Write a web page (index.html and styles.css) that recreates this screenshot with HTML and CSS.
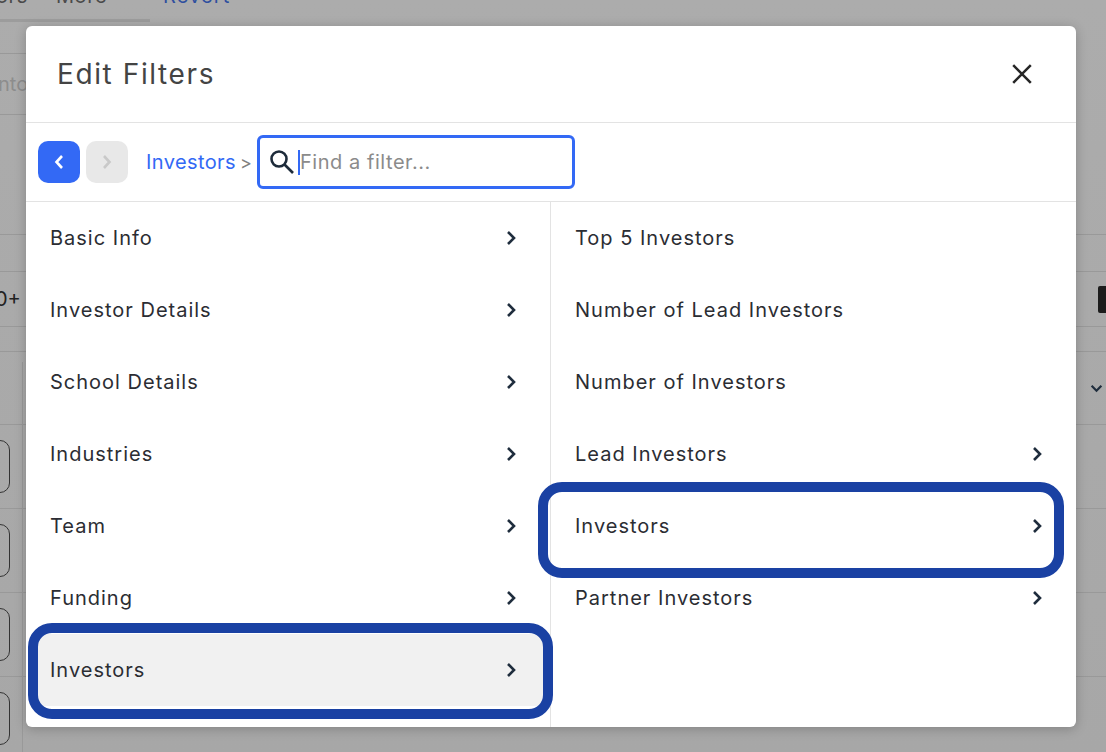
FILE: index.html
```html
<!DOCTYPE html>
<html lang="en">
<head>
<meta charset="utf-8">
<title>Edit Filters</title>
<link rel="stylesheet" href="styles.css">
</head>
<body>
<div class="page">
  <div class="tabs">
    <div class="tab-group"><span class="tab tab-cut">ors</span><span class="tab">More</span></div>
    <span class="revert">Revert</span>
  </div>
  <div class="bg-row short h33"></div>
  <div class="bg-row short h61"><span class="ghost">ntor</span></div>
  <div class="bg-row h120"></div>
  <div class="bg-row h37"></div>
  <div class="bg-row h55 split"><span class="count">0+</span><span class="black"></span></div>
  <div class="bg-row h25"></div>
  <div class="bg-row h73 end"><svg class="bg-chev" viewBox="0 0 12 8"><path d="M1.5 1.5 6 6l4.5-4.5"/></svg></div>
  <div class="bg-row h84"><span class="pill"></span></div>
  <div class="bg-row h84"><span class="pill"></span></div>
  <div class="bg-row h84"><span class="pill"></span></div>
  <div class="bg-row h84"><span class="pill"></span></div>
  <span class="bg-vline"></span>

  <div class="modal">
    <header class="modal-head">
      <h1>Edit Filters</h1>
      <svg class="close" viewBox="0 0 20 20"><path d="M2 2l16 16M18 2 2 18"/></svg>
    </header>
    <div class="toolbar">
      <button class="nav nav-on"><svg viewBox="0 0 12 18"><path d="M9 3 3.500 9 9 15"/></svg></button>
      <button class="nav nav-off"><svg viewBox="0 0 12 18"><path d="M3 3l5.500 6L3 15"/></svg></button>
      <span class="crumb">Investors</span>
      <span class="sep">&gt;</span>
      <div class="search">
        <svg class="glass" viewBox="0 0 26 26"><circle cx="10" cy="10" r="7.500"/><path d="M15.500 15.500l8.500 8.500"/></svg>
        <span class="caret"></span>
        <input class="search-input" type="text" placeholder="Find a filter...">
      </div>
    </div>
    <div class="cols">
      <ul class="col col-left">
        <li class="item"><span>Basic Info</span><svg class="chev" viewBox="0 0 10 16"><path d="M2 2l6 6-6 6"/></svg></li>
        <li class="item"><span>Investor Details</span><svg class="chev" viewBox="0 0 10 16"><path d="M2 2l6 6-6 6"/></svg></li>
        <li class="item"><span>School Details</span><svg class="chev" viewBox="0 0 10 16"><path d="M2 2l6 6-6 6"/></svg></li>
        <li class="item"><span>Industries</span><svg class="chev" viewBox="0 0 10 16"><path d="M2 2l6 6-6 6"/></svg></li>
        <li class="item"><span>Team</span><svg class="chev" viewBox="0 0 10 16"><path d="M2 2l6 6-6 6"/></svg></li>
        <li class="item"><span>Funding</span><svg class="chev" viewBox="0 0 10 16"><path d="M2 2l6 6-6 6"/></svg></li>
        <li class="item item-active"><span>Investors</span><svg class="chev" viewBox="0 0 10 16"><path d="M2 2l6 6-6 6"/></svg><i class="mark mark-left"></i></li>
      </ul>
      <ul class="col col-right">
        <li class="item"><span>Top 5 Investors</span></li>
        <li class="item"><span>Number of Lead Investors</span></li>
        <li class="item"><span>Number of Investors</span></li>
        <li class="item"><span>Lead Investors</span><svg class="chev" viewBox="0 0 10 16"><path d="M2 2l6 6-6 6"/></svg></li>
        <li class="item"><span>Investors</span><svg class="chev" viewBox="0 0 10 16"><path d="M2 2l6 6-6 6"/></svg><i class="mark mark-right"></i></li>
        <li class="item"><span>Partner Investors</span><svg class="chev" viewBox="0 0 10 16"><path d="M2 2l6 6-6 6"/></svg></li>
      </ul>
    </div>
  </div>
</div>
</body>
</html>
```

FILE: styles.css
```css
* { box-sizing: border-box; }
html, body { margin: 0; padding: 0; }
body { font-family: Inter, "Liberation Sans", sans-serif; background: #a9a9a9; overflow: hidden; }
.page { position: relative; width: 1106px; height: 752px; overflow: hidden; background: linear-gradient(#acacac, #a7a7a7); }

/* dimmed page behind the dialog */
.tabs { display: flex; height: 22px; align-items: flex-start; }
.tab-group { width: 150px; height: 22px; border-bottom: 3px solid #9c9c9c; display: flex; gap: 28px; }
.tab { font-size: 20px; line-height: 20px; height: 19px; color: #4a4a4a; margin-top: -14px; letter-spacing: .6px; }
.tab-cut { margin-left: -4px; }
.revert { font-size: 20px; line-height: 20px; margin: -14px 0 0 13px; color: #2f4f9f; letter-spacing: 1.1px; }
.bg-row { border-bottom: 1px solid #999; display: flex; align-items: center; }
.short { width: 40px; }
.h33 { height: 32px; }
.h61 { height: 61px; }
.h120 { height: 120px; }
.h37 { height: 37px; }
.h55 { height: 55px; }
.h25 { height: 25px; }
.h73 { height: 73px; }
.h84 { height: 84px; }
.ghost { font-size: 20px; color: #8d8d8d; margin-left: -2px; }
.split { justify-content: space-between; }
.count { font-size: 20px; color: #222; margin-left: -5px; }
.black { width: 8px; height: 27px; background: #1c1c1c; border-radius: 2px 0 0 2px; }
.end { justify-content: flex-end; }
.bg-chev { width: 13px; height: 9px; margin-right: 3px; fill: none; stroke: #1f2d3d; stroke-width: 2; }
.pill { width: 24px; height: 53px; margin-left: -14px; border: 1px solid #333; border-radius: 10px; }
.bg-vline { position: absolute; left: 22px; top: 362px; bottom: 0; width: 1px; background: #999; }

/* dialog */
.modal { position: absolute; left: 26px; top: 26px; width: 1050px; height: 701px; background: #fff; border-radius: 6px; box-shadow: 0 2px 12px rgba(0, 0, 0, .22); display: flex; flex-direction: column; }
.modal-head { height: 97px; flex: none; border-bottom: 1px solid #e3e3e3; display: flex; align-items: center; justify-content: space-between; padding: 0 43px 0 31px; }
h1 { margin: 0; font-size: 28px; font-weight: 400; color: #444; letter-spacing: 1.6px; }
.close { width: 22px; height: 22px; fill: none; stroke: #262626; stroke-width: 2.300; }
.toolbar { height: 79px; flex: none; border-bottom: 1px solid #e3e3e3; display: flex; align-items: center; padding: 0 0 0 12px; }
.nav { width: 42px; height: 42px; border: 0; padding: 0; border-radius: 10px; display: flex; align-items: center; justify-content: center; }
.nav svg { width: 12px; height: 18px; fill: none; stroke-width: 2.600; }
.nav-on { background: #3369f5; }
.nav-on svg { stroke: #fff; }
.nav-off { background: #e8e8e8; margin-left: 6px; }
.nav-off svg { stroke: #c9c9c9; }
.crumb { font-size: 20px; color: #3369f5; margin-left: 18px; letter-spacing: .4px; }
.sep { font-size: 18px; color: #808080; margin-left: 4px; }
.search { width: 318px; height: 54px; margin-left: 5px; border: 3px solid #3369f5; border-radius: 6px; display: flex; align-items: center; padding-left: 9px; }
.glass { width: 26px; height: 26px; flex: none; fill: none; stroke: #1d2b3a; stroke-width: 2.600; }
.caret { width: 2px; height: 25px; background: #3369f5; margin-left: 3px; flex: none; }
.search-input { border: 0; outline: 0; padding: 0; flex: 1; min-width: 0; margin-left: 0; font: 20px Inter, "Liberation Sans", sans-serif; letter-spacing: .55px; background: transparent; }
.search-input::placeholder { color: #8b8b8b; opacity: 1; }

.cols { flex: 1; display: flex; min-height: 0; }
.col { list-style: none; margin: 0; padding: 0; }
.col-left { width: 525px; border-right: 1px solid #e3e3e3; }
.col-right { flex: 1; }
.item { position: relative; height: 72px; display: flex; align-items: center; justify-content: space-between; padding: 0 34px 0 24px; font-size: 20px; color: #2b2d33; letter-spacing: 1px; }
.chev { width: 10px; height: 16px; flex: none; fill: none; stroke: #1f2d3d; stroke-width: 2.600; }
.item-active { margin: 0 6px 0 12px; padding: 0 28px 0 12px; background: #f1f1f1; }
.mark { position: absolute; border: 10px solid #1a41a3; border-radius: 24px; pointer-events: none; }
.mark-left { left: -10px; right: -9px; top: -11px; bottom: -13px; }
.mark-right { left: -13px; right: 12px; top: -8px; bottom: -16px; }
```
